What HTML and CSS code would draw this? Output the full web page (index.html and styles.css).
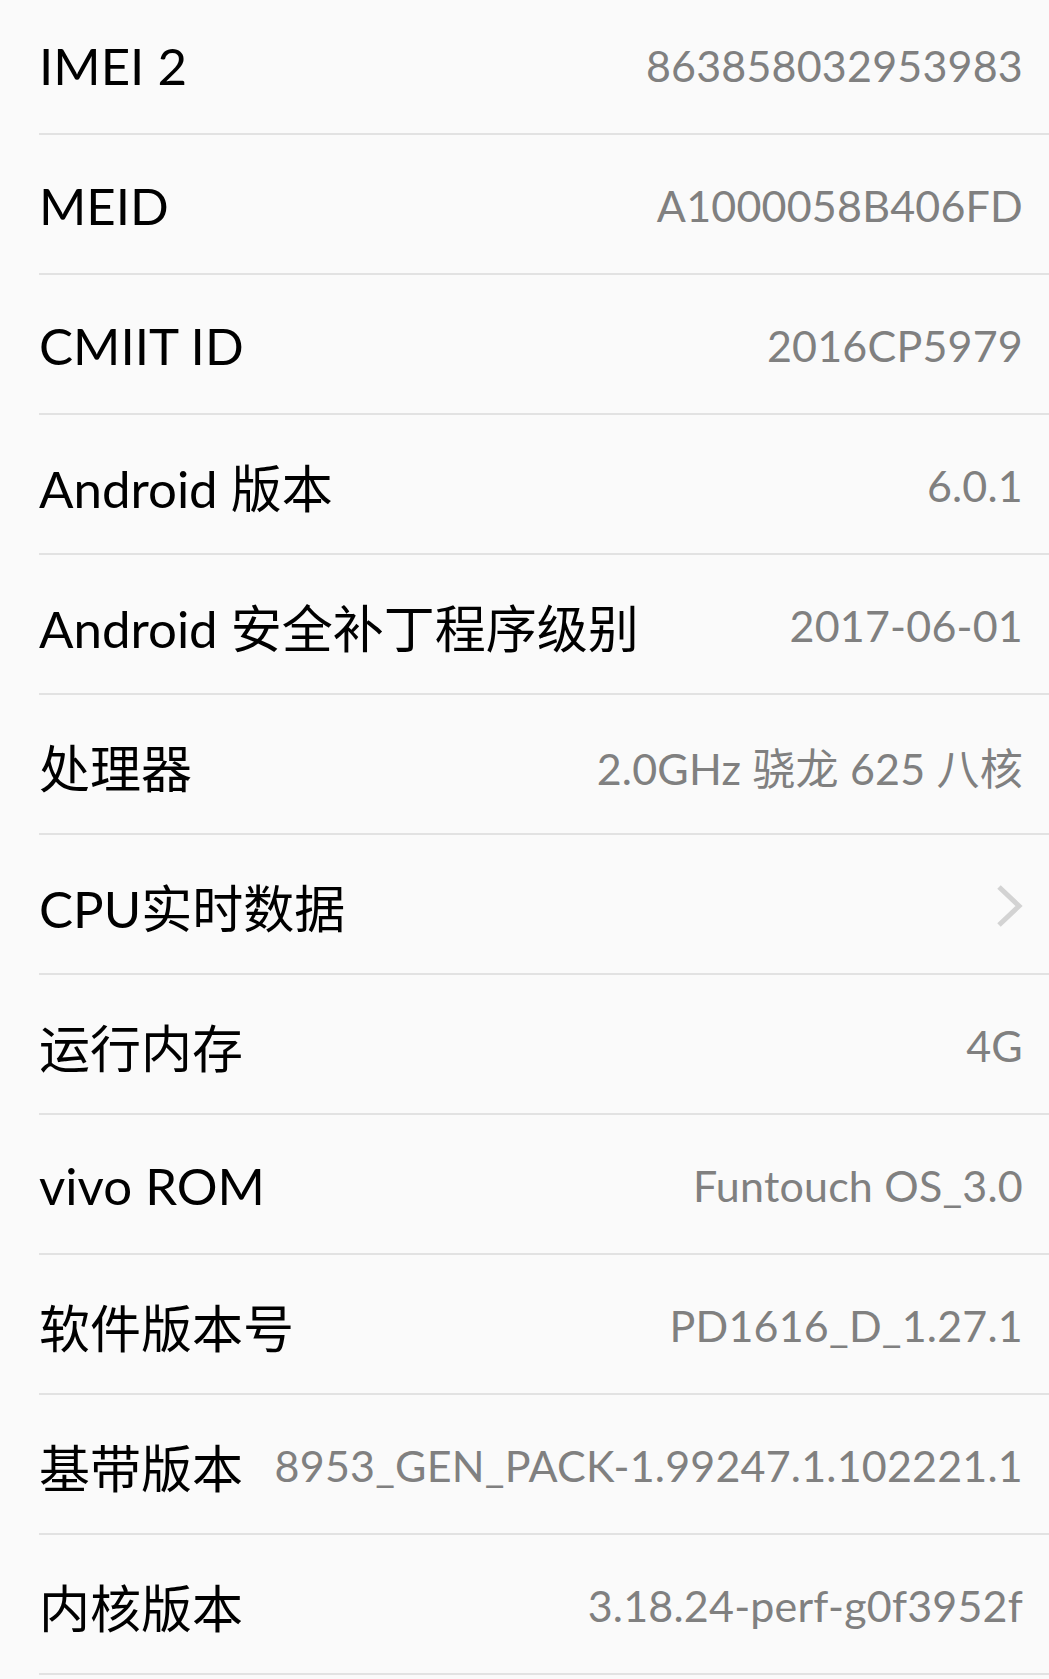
FILE: index.html
```html
<!DOCTYPE html>
<html lang="zh-CN">
<head>
<meta charset="utf-8">
<title>关于手机</title>
<link rel="stylesheet" href="styles.css">
</head>
<body>
<ul class="info-list">
  <li class="row"><span class="label">IMEI 2</span><span class="value">863858032953983</span></li>
  <li class="row"><span class="label">MEID</span><span class="value">A1000058B406FD</span></li>
  <li class="row"><span class="label">CMIIT ID</span><span class="value">2016CP5979</span></li>
  <li class="row"><span class="label">Android 版本</span><span class="value">6.0.1</span></li>
  <li class="row"><span class="label">Android 安全补丁程序级别</span><span class="value">2017-06-01</span></li>
  <li class="row"><span class="label">处理器</span><span class="value">2.0GHz 骁龙 625 八核</span></li>
  <li class="row"><span class="label">CPU实时数据</span><svg class="chevron" width="30" height="44" viewBox="0 0 30 44"><polyline points="4,3 24,22 4,41" fill="none" stroke="#d3d3d3" stroke-width="5"/></svg></li>
  <li class="row"><span class="label">运行内存</span><span class="value">4G</span></li>
  <li class="row"><span class="label">vivo ROM</span><span class="value">Funtouch OS_3.0</span></li>
  <li class="row"><span class="label">软件版本号</span><span class="value">PD1616_D_1.27.1</span></li>
  <li class="row"><span class="label">基带版本</span><span class="value">8953_GEN_PACK-1.99247.1.102221.1</span></li>
  <li class="row"><span class="label">内核版本</span><span class="value">3.18.24-perf-g0f3952f</span></li>
</ul>
</body>
</html>
```
FILE: styles.css
```css
html, body {
  margin: 0;
  padding: 0;
  background: #fafafa;
  height: 1679px;
  overflow: hidden;
}
body {
  font-family: Lato, "Noto Sans CJK SC", sans-serif;
}
.info-list {
  list-style: none;
  margin: -5px 0 0 0;
  padding: 0;
}
.row {
  display: flex;
  align-items: center;
  justify-content: space-between;
  gap: 30px;
  box-sizing: border-box;
  height: 140px;
  margin-left: 39px;
  padding: 3px 26px 0 0;
  border-bottom: 2px solid #e2e2e2;
}
.label {
  font-size: 51px;
  color: #000;
  white-space: nowrap;
}
.value {
  font-size: 43px;
  letter-spacing: 0.2px;
  color: #808080;
  white-space: nowrap;
  text-align: right;
}
.chevron {
  display: block;
  margin-right: -2px;
}
```
